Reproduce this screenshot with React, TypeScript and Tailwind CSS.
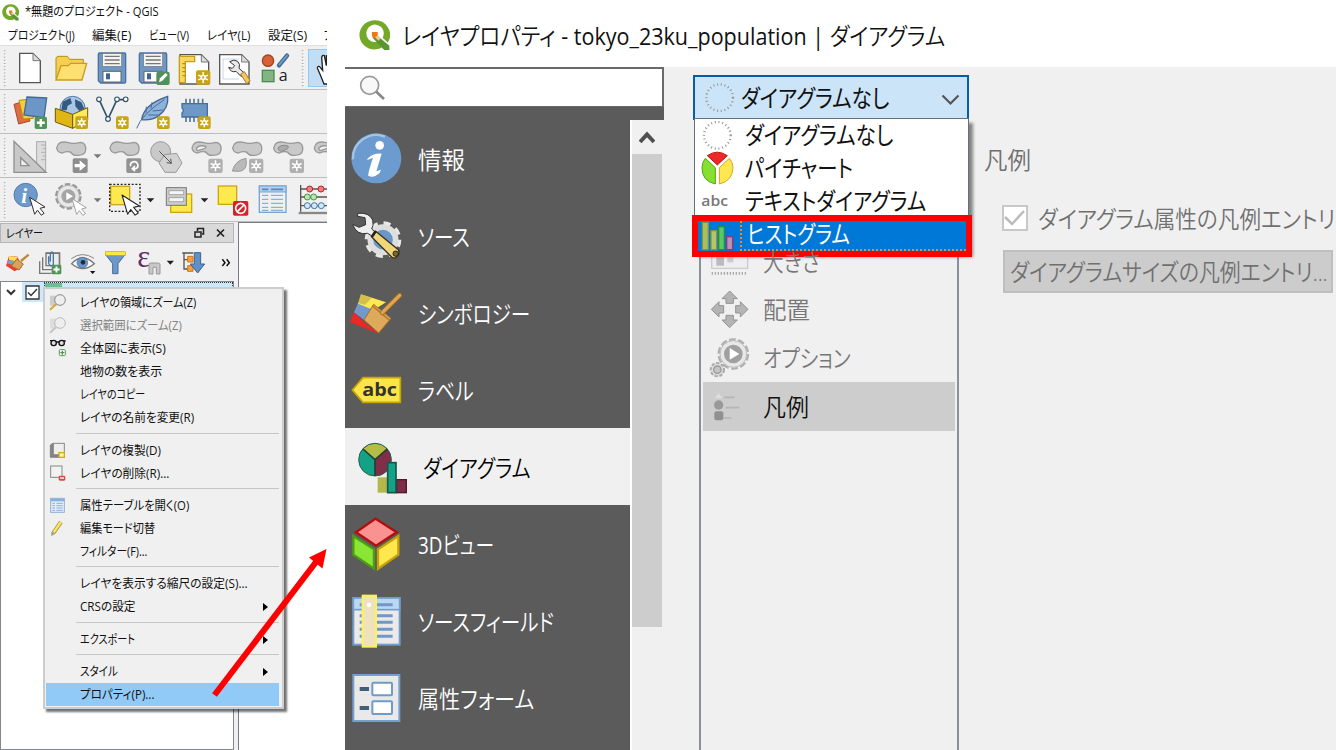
import React, { useLayoutEffect, useRef, useState } from "react";

type Kids = { children?: React.ReactNode };

/* Text condensed or widened to a given run width, like the narrow UI kana of Windows. */
function Fit({ w, className = "", children }: Kids & { w: number; className?: string }) {
  const ref = useRef<HTMLSpanElement>(null);
  const [nat, setNat] = useState(0);
  useLayoutEffect(() => {
    if (ref.current) setNat(ref.current.offsetWidth);
  }, []);
  return (
    <span
      ref={ref}
      className={"inline-block shrink-0 origin-left whitespace-pre leading-none [font-feature-settings:'palt'] " + className}
      style={nat ? { transform: `scaleX(${w / nat})`, marginRight: w - nat } : undefined}
    >
      {children}
    </span>
  );
}

/* Icon cell: three drawing units to one pixel. */
function Ic({ b, children }: Kids & { b: [number, number, number, number] }) {
  return (
    <svg className="block shrink-0 overflow-visible" width={b[2] / 3} height={b[3] / 3} viewBox={b.join(" ")}>
      {children}
    </svg>
  );
}

function Star({ x, y, c = "#c9a416", s = 38 }: { x: number; y: number; c?: string; s?: number }) {
  const m = s / 2;
  return (
    <g transform={`translate(${x} ${y})`}>
      <rect width={s} height={s} rx="6" fill={c} />
      <g stroke="#fff" strokeWidth="4.5">
        <path d={`M${m} 5V${s - 5}M7 ${m - 7}L${s - 7} ${m + 7}M7 ${m + 7}L${s - 7} ${m - 7}`} />
      </g>
      <circle cx={m} cy={m} r="8" fill="#fff" />
      <circle cx={m} cy={m} r="3.5" fill={c} />
    </g>
  );
}

function Plus({ x, y, s = 36 }: { x: number; y: number; s?: number }) {
  const m = s / 2;
  return (
    <g transform={`translate(${x} ${y})`}>
      <rect width={s} height={s} rx={s / 7} fill="#51945a" />
      <path d={`M${m} ${s * 0.18}V${s * 0.82}M${s * 0.18} ${m}H${s * 0.82}`} stroke="#fff" strokeWidth={s / 5} />
    </g>
  );
}

function Handle() {
  return (
    <Ic b={[0, 140, 30, 123]}>
      <path d="M14 150V258" stroke="#a8a8a8" strokeWidth="5" strokeDasharray="3 6.5" />
      <path d="M17 153V258" stroke="#fff" strokeWidth="3" strokeDasharray="3 6.5" />
    </Ic>
  );
}

function Cursor({ x, y, k = 1, f = "#fff", s = "#222" }: { x: number; y: number; k?: number; f?: string; s?: string }) {
  return (
    <path
      transform={`translate(${x} ${y}) scale(${k})`}
      d="M0 0L49 31L33 35L46 51L37 57L25 41L16 54Z"
      fill={f}
      stroke={s}
      strokeWidth="3"
      strokeLinejoin="round"
    />
  );
}

function Qlogo({ s }: { s: number }) {
  return (
    <svg className="block shrink-0" width={s} height={s} viewBox="0 0 96 96">
      <path d="M47 1A46 45 0 1 0 72 84L58 67A27 27 0 1 1 73 55L89 70A46 45 0 0 0 47 1Z" fill="#74a829" />
      <path d="M48 41L94 80V93H78L42 55Z" fill="#589632" />
      <path d="M40 37H58V49L50 57L40 50Z" fill="#ee7913" />
      <path d="M50 54L58 47L67 57L60 64Z" fill="#f3c58f" />
    </svg>
  );
}

function Floppy({ x }: { x: number }) {
  return (
    <g transform={`translate(${x} 0)`}>
      <path d="M2 158H80Q83 158 83 162V244Q83 248 79 248H8L1 241V162Q1 158 5 158Z" fill="#6d97c4" stroke="#4b719c" strokeWidth="4" />
      <rect x="14" y="160" width="57" height="38" fill="#f4f4f2" stroke="#777" strokeWidth="2" />
      <path d="M20 168H65M20 179H65M20 190H65" stroke="#777" strokeWidth="4" />
      <rect x="15" y="213" width="54" height="32" fill="#fff" stroke="#666" strokeWidth="3" />
      <rect x="24" y="219" width="12" height="18" fill="#3d6697" />
    </g>
  );
}

function Page({ x, w = 64 }: { x: number; w?: number }) {
  return (
    <g transform={`translate(${x} 0)`}>
      <path d={`M2 159H${w - 22}L${w} 181V247H2Z`} fill="#fff" stroke="#555" strokeWidth="4" />
      <path d={`M${w - 22} 159V181H${w}Z`} fill="#ddd" stroke="#777" strokeWidth="3" />
    </g>
  );
}

const row = "flex h-[44px] items-center overflow-hidden border-b border-[#bdbdbd] bg-[#f0f0f0]";

function Toolbar1() {
  return (
    <div className={row}>
      <Handle />
      <Ic b={[30, 140, 123, 123]}><Page x={57} /></Ic>
      <Ic b={[153, 140, 123, 123]}>
        <path d="M168 236V172L174 168H202L209 177H250V190" fill="#f5cf52" stroke="#b38f1c" strokeWidth="3" />
        <path d="M168 239L183 196H205L212 189H260L246 239Z" fill="#ffdf70" stroke="#c79c25" strokeWidth="4" />
      </Ic>
      <Ic b={[276, 140, 123, 123]}><Floppy x={294} /></Ic>
      <Ic b={[399, 140, 123, 123]}>
        <Floppy x={417} />
        <rect x="469" y="214" width="40" height="40" rx="6" fill="#4f9159" />
        <path d="M477 246L480 234L497 218L503 224L487 241Z" fill="#fff" />
      </Ic>
      <Ic b={[522, 140, 123, 123]}>
        <g transform="translate(0 4)"><Page x={538} w={88} /></g>
        <path d="M538 168H584V184H556V247H538Z" fill="#f9d65c" stroke="#c59d20" strokeWidth="4" />
        <path d="M547 190H556M547 202H556M547 214H556M547 226H556" stroke="#a88212" strokeWidth="3" />
        <Star x={588} y={210} s={43} />
      </Ic>
      <Ic b={[645, 140, 123, 123]}>
        <g transform="translate(0 4)"><Page x={657} w={90} /></g>
        <path d="M669 176H716M669 236H716M669 176V236" stroke="#a8c4e0" strokeWidth="2" />
        <path d="M689 184Q702 175 713 183Q722 192 717 204L734 219L724 229L708 213Q693 218 686 201L697 204L704 196Z" fill="#e9e9e9" stroke="#333" strokeWidth="3" />
        <path d="M722 222L733 214L750 240L741 251Z" fill="#f1c764" stroke="#a8791f" strokeWidth="3" />
      </Ic>
      <Ic b={[768, 140, 123, 123]}>
        <circle cx="804" cy="181" r="17" fill="#d5603a" stroke="#a5421f" strokeWidth="4" />
        <path d="M837 195L861 166" stroke="#40658f" strokeWidth="13" strokeLinecap="round" />
        <path d="M838 193L861 166" stroke="#6d9ccb" strokeWidth="6" strokeLinecap="round" />
        <rect x="787" y="210" width="35" height="34" fill="#83b583" stroke="#4e8a54" strokeWidth="4" />
        <text x="836" y="241" fontSize="48" fontFamily="Open Sans" fill="#222">a</text>
      </Ic>
      <div className="ml-px h-full w-px bg-[#bbb]" />
      <Handle />
      <div className="flex h-[38px] w-[20px] shrink-0 items-center border border-[#90c8f6] bg-[#c2def5]">
        <Ic b={[930, 145, 60, 110]}>
          <path d="M965 225L955 202Q956 195 962 198L971 209L968 170Q970 162 976 165L982 195V165H995V250H975Z" fill="#fff" stroke="#222" strokeWidth="4" />
        </Ic>
      </div>
    </div>
  );
}

function Toolbar2() {
  return (
    <div className={row}>
      <Handle />
      <Ic b={[30, 272, 123, 123]}>
        <path d="M42 312L74 302L90 362L56 371Z" fill="#dd6e43" stroke="#a9481f" strokeWidth="3" />
        <path d="M57 300L93 296L100 354L70 356Z" fill="#f5cd3d" stroke="#b88d12" strokeWidth="3" />
        <path d="M81 290L140 293L132 352L72 344Z" fill="#6b96c5" stroke="#436a97" strokeWidth="4" />
        <Plus x={104} y={349} s={37} />
      </Ic>
      <Ic b={[153, 272, 123, 123]}>
        <circle cx="218" cy="326" r="38" fill="#a9c6e6" stroke="#4e79a8" strokeWidth="3" />
        <path d="M188 304L211 293L216 309L203 316L200 330H184ZM225 297L244 306L253 325L238 332L226 318Z" fill="#36597f" />
        <path d="M166 324L218 342V384L166 365Z" fill="#e0b616" stroke="#6e5906" strokeWidth="3" />
        <path d="M218 342L263 322V358L218 384Z" fill="#ffe95c" stroke="#6e5906" strokeWidth="3" />
        <Star x={226} y={348} />
      </Ic>
      <Ic b={[276, 272, 123, 123]}>
        <path d="M297 297L324 356L351 298H377" fill="none" stroke="#34536b" strokeWidth="5" />
        <g fill="#fff" stroke="#34536b" strokeWidth="3.5"><circle cx="297" cy="297" r="7" /><circle cx="324" cy="356" r="7" /><circle cx="351" cy="297" r="7" /><circle cx="377" cy="297" r="7" /></g>
        <Star x={348} y={348} />
      </Ic>
      <Ic b={[399, 272, 123, 123]}>
        <path d="M425 358Q431 312 503 288Q507 324 476 346Q456 361 425 358Z" fill="#8db2dc" stroke="#3f668f" strokeWidth="4" />
        <path d="M410 384Q424 343 494 297M438 337L439 319M453 325L456 306M445 344L476 344M458 332L489 329" fill="none" stroke="#456f99" strokeWidth="3" />
        <Star x={471} y={348} />
      </Ic>
      <Ic b={[522, 272, 123, 123]}>
        <path d="M558 295V365M570 295V365M582 295V365M595 295V365M608 295V365" stroke="#597894" strokeWidth="5" />
        <path d="M546 310H622V350H546V338Q554 330 546 323Z" fill="#6d97c4" stroke="#456f9c" strokeWidth="4" />
        <Star x={594} y={348} />
      </Ic>
    </div>
  );
}

const Tri = ({ c = "#222" }: { c?: string }) => (
  <Ic b={[0, 0, 33, 123]}><path d="M5 58H28L16.5 70Z" fill={c} /></Ic>
);

const blob = "M3 25Q6 3 35 8Q52 14 75 8Q92 10 90 31Q88 47 66 47Q53 49 44 37Q33 34 20 40Q5 39 3 25Z";
const Blob = ({ x, hole }: { x: number; hole?: boolean }) => (
  <g transform={`translate(${x} 26)`} stroke="#999" strokeWidth="4">
    <path d={blob} fill="#c9c9c9" />
    {hole && <path d="M17 25Q25 15 44 20Q47 27 33 29L21 33Q15 31 17 25Z" fill="#f0f0f0" />}
  </g>
);
const g = "#b0b0b0";

function Toolbar3() {
  return (
    <div className={row}>
      <Handle />
      <Ic b={[30, 12, 123, 123]}>
        <rect x="110" y="32" width="27" height="92" fill="#ddd" stroke="#aaa" strokeWidth="3" />
        <path d="M123 42H136M128 53H136M123 64H136M128 75H136M123 86H136" stroke="#999" strokeWidth="2" />
        <path fillRule="evenodd" d="M42 31V124H138ZM62 80V104H87Z" fill="#c8c8c8" stroke="#909090" strokeWidth="4" />
      </Ic>
      <Ic b={[153, 12, 123, 123]}>
        <Blob x={167} />
        <rect x="218" y="82" width="45" height="44" rx="5" fill="#8e8e8e" />
        <path d="M224 99H239V88L258 104L239 120V109H224Z" fill="#fff" />
      </Ic>
      <Tri c="#777" />
      <Ic b={[309, 12, 123, 123]}>
        <Blob x={327} />
        <rect x="379" y="82" width="45" height="44" rx="5" fill="#929292" />
        <path d="M392 106A11 11 0 1 1 407 113H397M405 105L397 113L405 120" fill="none" stroke="#fff" strokeWidth="5" />
      </Ic>
      <Ic b={[432, 12, 123, 123]}>
        <circle cx="482" cy="62" r="30" fill="#c9c9c9" stroke="#999" strokeWidth="3" />
        <path d="M494 71L530 67L546 96L528 124H495L477 96Z" fill="#d2d2d2" stroke="#999" strokeWidth="3" />
        <path d="M478 61L514 97M500 95L514 97L512 83" fill="none" stroke="#555" strokeWidth="3" />
      </Ic>
      <Ic b={[555, 12, 123, 123]}><Blob x={573} hole /><Star x={625} y={83} c={g} s={43} /></Ic>
      <Ic b={[678, 12, 123, 123]}>
        <Blob x={695} />
        <path d="M697 120Q705 88 738 82Q744 119 718 121Z" fill="#b9b9b9" stroke="#999" strokeWidth="3" />
        <Star x={747} y={83} c={g} s={43} />
      </Ic>
      <Ic b={[801, 12, 123, 123]}>
        <Blob x={818} />
        <path d="M834 52Q840 39 864 45Q868 53 853 58Q838 66 834 52Z" fill="#ababab" stroke="#888" strokeWidth="3" />
        <Star x={869} y={83} c={g} s={43} />
      </Ic>
      <Ic b={[924, 12, 60, 123]}><Blob x={940} hole /></Ic>
    </div>
  );
}

function Toolbar4() {
  return (
    <div className={row}>
      <Handle />
      <Ic b={[30, 148, 123, 123]}>
        <circle cx="77" cy="196" r="35" fill="#6d9acb" stroke="#527fb1" strokeWidth="3" />
        <text x="64" y="219" fontSize="64" fontStyle="italic" fontWeight="bold" fontFamily="Liberation Serif" fill="#fff">i</text>
        <Cursor x={89} y={203} k={0.94} />
      </Ic>
      <Ic b={[153, 148, 123, 123]}>
        <circle cx="205" cy="200" r="36" fill="#ddd" stroke="#999" strokeWidth="8" strokeDasharray="16 6.600" />
        <circle cx="205" cy="200" r="33" fill="#e7e7e7" stroke="#a5a5a5" strokeWidth="2" />
        <circle cx="205" cy="200" r="21" fill="#a5a5a5" />
        <path d="M199 188L219 200L199 212Z" fill="#fff" />
        <Cursor x={216} y={207} k={0.88} s="#999" />
      </Ic>
      <Tri c="#777" />
      <Ic b={[309, 148, 126, 123]}>
        <rect x="332" y="170" width="57" height="55" fill="#ffe94f" stroke="#cba718" strokeWidth="4" />
        <rect x="329" y="164" width="91" height="81" fill="none" stroke="#222" strokeWidth="4" strokeDasharray="6 5" />
        <Cursor x={366} y={196} k={1.06} />
      </Ic>
      <Tri />
      <Ic b={[468, 148, 129, 123]}>
        <rect x="512" y="193" width="63" height="55" fill="#ffe94f" stroke="#cba718" strokeWidth="4" />
        <rect x="499" y="174" width="60" height="53" fill="#ccc" stroke="#777" strokeWidth="3" />
        <path d="M507 183H551V195H507ZM507 204H551V216H507Z" fill="#f5f5f5" stroke="#888" strokeWidth="2" />
      </Ic>
      <Tri />
      <Ic b={[630, 148, 123, 123]}>
        <rect x="655" y="169" width="55" height="55" fill="#ffe94f" stroke="#cba718" strokeWidth="4" />
        <rect x="699" y="214" width="46" height="44" rx="5" fill="#d3242a" />
        <circle cx="722" cy="236" r="15" fill="none" stroke="#fff" strokeWidth="5" />
        <path d="M712 246L732 226" stroke="#fff" strokeWidth="5" />
      </Ic>
      <Ic b={[753, 148, 123, 123]}>
        <rect x="778" y="169" width="80" height="79" fill="#f0f0ee" stroke="#79a3d2" strokeWidth="4" />
        <rect x="778" y="169" width="80" height="18" fill="#aecfee" stroke="#79a3d2" strokeWidth="3" />
        <path d="M786 179H805M813 179H849" stroke="#5c88b8" strokeWidth="5" />
        <path d="M786 197H805M813 197H849M786 209H805M813 209H849M786 221H805M813 221H849M786 233H805M813 233H849M786 242H805M813 242H849" stroke="#8eb0d6" strokeWidth="4" />
      </Ic>
      <Ic b={[876, 148, 110, 123]}>
        <path d="M902 166V246M902 178H990M902 202H990M902 228H990" stroke="#555" strokeWidth="4" />
        <path d="M896 250H990" stroke="#888" strokeWidth="7" />
        <g fill="#f08080" stroke="#be2323" strokeWidth="3"><circle cx="929" cy="178" r="9" /><circle cx="963" cy="178" r="9" /></g>
        <g fill="#b5e8b0" stroke="#4b9149" strokeWidth="3"><circle cx="922" cy="202" r="9" /><circle cx="941" cy="202" r="9" /></g>
        <g fill="#cfe8fa" stroke="#41749c" strokeWidth="3"><circle cx="922" cy="228" r="9" /><circle cx="943" cy="228" r="9" /><circle cx="964" cy="228" r="9" /></g>
      </Ic>
    </div>
  );
}

function LayerTools() {
  return (
    <div className="flex h-[38px] items-center">
      <Ic b={[0, 345, 105, 105]}>
        <path d="M27 378L53 380L65 412L44 424L18 407Z" fill="#ee3a32" />
        <path d="M27 378L54 382L46 394L27 390Z" fill="#fae44c" />
        <path d="M27 390L46 394L36 404L20 400Z" fill="#779fd3" />
        <path d="M50 387L70 402L57 420L34 408Z" fill="#dba35c" stroke="#a8702a" strokeWidth="3" />
        <path d="M63 393L86 374" stroke="#c28637" strokeWidth="7" />
      </Ic>
      <Ic b={[105, 345, 96, 105]}>
        <path d="M137 369H179V409M119 394V430H155M128 382V419H168" fill="none" stroke="#777" strokeWidth="4" />
        <path d="M138 370H178V407H138Z" fill="#ebebeb" stroke="#777" strokeWidth="4" />
        <path d="M151 395V372Q155 360 160 371V403Q152 413 146 400V379" fill="none" stroke="#4a76a4" strokeWidth="4" />
        <Plus x={155} y={404} s={29} />
      </Ic>
      <Ic b={[201, 345, 99, 105]}>
        <path d="M215 401Q247 367 283 401Q248 430 215 401Z" fill="#fafafa" stroke="#777" strokeWidth="4" />
        <path d="M214 386Q247 362 282 385" fill="none" stroke="#888" strokeWidth="3" />
        <circle cx="247" cy="398" r="16" fill="#6a98c9" stroke="#456f9a" strokeWidth="2" />
        <circle cx="249" cy="397" r="7" fill="#1d2d40" />
        <path d="M270 423H286L278 432Z" fill="#111" />
      </Ic>
      <Ic b={[300, 345, 96, 105]}>
        <path d="M317 374H375L354 401V431H338V401Z" fill="#6d98c8" stroke="#456c9c" strokeWidth="3" />
        <rect x="316" y="365" width="60" height="11" fill="#fae748" stroke="#c8a515" strokeWidth="2" />
      </Ic>
      <Ic b={[396, 345, 99, 105]}>
        <text x="412" y="410" fontSize="92" fontFamily="Liberation Serif" fill="#5d2f64">ε</text>
        <path d="M447 432V403Q447 399 452 399H475Q480 399 480 404V432H469V412H459V432Z" fill="#c7c7c7" stroke="#999" strokeWidth="3" />
      </Ic>
      <Ic b={[495, 345, 33, 105]}><path d="M500 392H522L511 404Z" fill="#222" /></Ic>
      <Ic b={[528, 345, 111, 105]}>
        <path d="M552 370V417H565M552 389H565M547 369H580" fill="none" stroke="#555" strokeWidth="4" />
        <path d="M563 379H579V396H563ZM563 407H579V424H563Z" fill="#f5a13c" stroke="#d87312" strokeWidth="3" />
        <path d="M583 368H602V402H614L593 429L571 402H583Z" fill="#5f90c6" stroke="#3b6490" strokeWidth="3" />
      </Ic>
      <Ic b={[639, 345, 60, 105]}>
        <path d="M667 388L675 398L667 408M680 388L688 398L680 408" fill="none" stroke="#111" strokeWidth="4.500" />
      </Ic>
    </div>
  );
}

function LayerPanel() {
  return (
    <div className="flex flex-1">
      <div className="flex w-[234px] flex-col bg-[#f0f0f0] pt-px">
        <div className="flex h-[20px] items-center border border-[#b5b5b5] bg-[#d9d9d9] pl-[5px] pr-[7px] text-[12px]">
          <Fit w={37} className="mt-px">レイヤー</Fit>
          <svg className="ml-auto" width="32" height="12" viewBox="0 0 32 12" fill="none" stroke="#222">
            <path d="M3.5 4V1.500H9.500V7H8" strokeWidth="1.500" />
            <path d="M1 5H7V10H1Z" strokeWidth="1.500" />
            <path d="M23 2.500L30 9.500M30 2.500L23 9.500" strokeWidth="1.700" />
          </svg>
        </div>
        <LayerTools />
        <div className="flex flex-1 items-start border border-[#828790] bg-white">
          <svg className="block shrink-0" width="21" height="21" viewBox="0 0 21 21"><path d="M6 8L10 12L14 8" fill="none" stroke="#333" strokeWidth="2" /></svg>
          <div className="flex h-[20px] w-[22px] items-center bg-[#cce8ff] pl-[3px]">
            <svg width="15" height="15" viewBox="0 0 15 15"><path d="M1 1H14V14H1Z" fill="#fff" stroke="#333" strokeWidth="1.300" /><path d="M3 7.500L6 10.500L12 4" fill="none" stroke="#333" strokeWidth="1.400" /></svg>
          </div>
          <div className="h-[20px] flex-1 border border-dotted border-[#333] bg-[#cce8ff]">
            <div className="h-[6px] w-[17px] bg-[#6fbd94]" />
          </div>
        </div>
      </div>
      <div className="w-[4px] bg-[#f0f0f0]" />
      <div className="flex-1 border-l border-t border-[#777b84] bg-white" />
    </div>
  );
}

type Entry = { t: string; w: number; sub?: boolean; off?: boolean; hot?: boolean; icon?: React.ReactNode } | null;

const Lens = ({ off }: { off?: boolean }) => (
  <g opacity={off ? 0.5 : 1}>
    <path d="M150 46H172V76H150Z" fill="#ccc" />
    <path d="M168 72L150 88" stroke={off ? "#999" : "#d5a638"} strokeWidth="6" />
    <circle cx="180" cy="59" r="16" fill="#eee" stroke="#888" strokeWidth="3" />
  </g>
);

const entries: Entry[] = [
  { t: "レイヤの領域にズーム(Z)", w: 116, icon: <Lens /> },
  { t: "選択範囲にズーム(Z)", w: 102, off: true, icon: <Lens off /> },
  {
    t: "全体図に表示(S)", w: 86,
    icon: (
      <g>
        <path d="M150 43H160M165 47H180M190 44H197" stroke="#111" strokeWidth="4" />
        <g fill="#ddd" stroke="#111" strokeWidth="4"><circle cx="161" cy="50" r="8" /><circle cx="185" cy="50" r="8" /></g>
        <rect x="178" y="70" width="18" height="18" rx="3" fill="#fff" stroke="#51945a" strokeWidth="3" />
        <path d="M187 73V85M181 79H193" stroke="#51945a" strokeWidth="4" />
      </g>
    ),
  },
  { t: "地物の数を表示", w: 82 },
  { t: "レイヤのコピー", w: 65 },
  { t: "レイヤの名前を変更(R)", w: 114 },
  null,
  {
    t: "レイヤの複製(D)", w: 81,
    icon: (
      <g>
        <path d="M151 50L159 45V81H188L184 87H151Z" fill="#888" stroke="#666" strokeWidth="2" />
        <rect x="160" y="45" width="33" height="34" fill="#eee" stroke="#888" strokeWidth="3" />
        <rect x="177" y="73" width="16" height="14" fill="#fff6b0" stroke="#d0a91d" strokeWidth="4" />
      </g>
    ),
  },
  {
    t: "レイヤの削除(R)...", w: 89,
    icon: (
      <g>
        <rect x="152" y="44" width="34" height="34" fill="#f2f2f2" stroke="#888" strokeWidth="3" />
        <rect x="176" y="73" width="20" height="15" rx="4" fill="#df4850" />
        <path d="M180 80H192" stroke="#fff" strokeWidth="4" />
      </g>
    ),
  },
  null,
  {
    t: "属性テーブルを開く(O)", w: 109,
    icon: (
      <g>
        <rect x="152" y="45" width="41" height="42" fill="#e5edf6" stroke="#8dafd6" strokeWidth="3" />
        <path d="M152 50H193" stroke="#87b0de" strokeWidth="8" />
        <path d="M157 60H165M169 60H188M157 67H165M169 67H188M157 74H165M169 74H188M157 81H165M169 81H188" stroke="#8dafd6" strokeWidth="3" />
      </g>
    ),
  },
  {
    t: "編集モード切替", w: 75,
    icon: (
      <g>
        <path d="M160 80L183 47" stroke="#b29b27" strokeWidth="12" />
        <path d="M161 78L183 47" stroke="#f6e679" strokeWidth="7" />
        <path d="M154 76L164 83L154 90Z" fill="#999" />
      </g>
    ),
  },
  { t: "フィルター(F)...", w: 67 },
  null,
  { t: "レイヤを表示する縮尺の設定(S)...", w: 168 },
  { t: "CRSの設定", w: 56, sub: true },
  null,
  { t: "エクスポート", w: 55, sub: true },
  null,
  { t: "スタイル", w: 38, sub: true },
  { t: "プロパティ(P)...", w: 74, hot: true },
];

function ContextMenu() {
  return (
    <div className="absolute left-[43px] top-[287px] h-[422px] w-[241px] border-2 border-[#ccc] bg-[#f0f0f0] px-px pt-[2px] text-[12.500px] shadow-[3px_3px_2px_rgba(0,0,0,0.550)]">
      {entries.map((e, i) =>
        e ? (
          <div key={i} className={"flex h-[23.1px] w-[233px] items-center " + (e.hot ? "bg-[#91c9f7]" : "") + (e.off ? " text-[#838383]" : " text-[#111]")}>
            <Ic b={[138, 32, 102, 69]}>{e.icon}</Ic>
            <Fit w={e.w} className="mt-px">{e.t}</Fit>
            {e.sub && <svg className="ml-auto mr-[11px]" width="5" height="8" viewBox="0 0 5 8"><path d="M0 0L5 4L0 8Z" fill="#000" /></svg>}
          </div>
        ) : (
          <div key={i} className="flex h-[9.2px] items-start pt-[3px]"><div className="ml-[30px] h-px w-[203px] bg-[#c6c6c6]" /></div>
        )
      )}
    </div>
  );
}

const menus: [string, number, string][] = [
  ["プロジェクト(J)", 67, "w-[84px]"],
  ["編集(E)", 39, "w-[57px]"],
  ["ビュー(V)", 40, "w-[58px]"],
  ["レイヤ(L)", 43, "w-[61px]"],
  ["設定(S)", 39, "w-[56px]"],
];

function MainWindow() {
  return (
    <div className="relative flex w-[327px] shrink-0 flex-col overflow-hidden">
      <div className="flex h-[24px] items-center gap-[6px] pl-[2px] text-[12.500px]">
        <Qlogo s={17} />
        <Fit w={134} className="mt-px">*無題のプロジェクト - QGIS</Fit>
      </div>
      <div className="flex h-[22px] items-center overflow-hidden border-b border-[#e0e0e0] pl-[8px] pt-[3px] text-[12.500px]">
        {menus.map(([t, w, c]) => <div key={t} className={"flex shrink-0 " + c}><Fit w={w}>{t}</Fit></div>)}
        <Fit w={8}>プ</Fit>
      </div>
      <Toolbar1 />
      <Toolbar2 />
      <Toolbar3 />
      <Toolbar4 />
      <LayerPanel />
      <ContextMenu />
    </div>
  );
}

const sections: { pre?: string; t: string; w: number; y: number; on?: boolean; icon: React.ReactNode }[] = [
  {
    t: "情報", w: 47, y: 360,
    icon: (
      <g>
        <circle cx="94" cy="475" r="75" fill="#6b9bcf" />
        <path d="M24 478A70 70 0 0 1 120 410" fill="none" stroke="#a4c4e6" strokeWidth="7" />
        <circle cx="104" cy="436" r="13" fill="#fff" />
        <path d="M67 477Q84 459 110 461L94 514L108 509L104 519Q85 536 70 527Q68 520 84 473L67 480Z" fill="#fff" />
      </g>
    ),
  },
  {
    t: "ソース", w: 52, y: 591,
    icon: (
      <g>
        <circle cx="114" cy="719" r="49" fill="none" stroke="#e8e8e8" strokeWidth="12" strokeDasharray="21 17.500" />
        <circle cx="114" cy="719" r="38" fill="#6897c8" stroke="#dedede" strokeWidth="17" />
        <path d="M38 640Q72 636 83 660Q87 678 80 687L93 698L84 710L68 700Q35 707 23 673L42 682L62 674L60 653L38 649Z" fill="#eee" stroke="#333" strokeWidth="3" />
        <path d="M92 694L160 749Q167 763 151 774Q143 776 136 767L80 711Z" fill="#f0d67b" stroke="#39301a" strokeWidth="4" />
        <path d="M92 694L80 711" stroke="#222" strokeWidth="8" />
        <circle cx="152" cy="761" r="8" fill="#7a6a2d" stroke="#222" strokeWidth="3" />
      </g>
    ),
  },
  {
    t: "シンボロジー", w: 112, y: 12,
    icon: (
      <g>
        <path d="M27 126L60 160L101 189L95 189L15 156Z" fill="#ec2724" />
        <path d="M39 99L83 113L63 144L60 152L27 127Z" fill="#7398cc" />
        <path d="M48 73L123 97L86 120L39 101Z" fill="#fbe94f" />
        <path d="M48 73L80 84L60 104L39 99Z" fill="#bba94c" opacity=".65" />
        <path d="M86 103L138 145L101 189L57 150Z" fill="#dfa95b" stroke="#a66e26" strokeWidth="3" />
        <path d="M82 107L134 151" stroke="#b67a2d" strokeWidth="5" />
        <path d="M112 128L164 76" stroke="#a46e23" strokeWidth="15" strokeLinecap="round" />
        <path d="M112 128L164 76" stroke="#e2a551" strokeWidth="9" strokeLinecap="round" />
      </g>
    ),
  },
  {
    t: "ラベル", w: 56, y: 243,
    icon: (
      <g>
        <path d="M22 360L54 323H166V397H54Z" fill="#fbe549" stroke="#c6a500" strokeWidth="5" />
        <text x="52" y="377" fontSize="55" fontWeight="bold" fontFamily="Open Sans" fill="#333" textLength="104" lengthAdjust="spacingAndGlyphs">abc</text>
      </g>
    ),
  },
  {
    t: "ダイアグラム", w: 108, y: 474, on: true,
    icon: (
      <g>
        <circle cx="90" cy="569" r="49" fill="#13a286" />
        <path d="M90 569V618A49 49 0 0 0 127 537Z" fill="#832e49" />
        <path d="M90 569L54 537A49 49 0 0 1 127 537Z" fill="#b4be45" />
        <circle cx="90" cy="569" r="49" fill="none" stroke="#285e51" strokeWidth="3" />
        <path d="M90 569V618M90 569L54 537M90 569L127 537" stroke="#243f36" strokeWidth="5" />
        <rect x="98" y="622" width="32" height="46" fill="#b4b84b" />
        <rect x="155" y="629" width="29" height="39" fill="#812c46" stroke="#4e1930" strokeWidth="4" />
        <rect x="128" y="578" width="25" height="90" fill="#13a286" stroke="#14584b" strokeWidth="5" />
      </g>
    ),
  },
  {
    pre: "3D", t: "ビュー", w: 76, y: 15,
    icon: (
      <g strokeWidth="7">
        <path d="M92 56L155 97L93 137L33 97Z" fill="#f99291" stroke="#b30d0d" />
        <path d="M25 108L87 148V206L25 164Z" fill="#8be534" stroke="#4d9c13" />
        <path d="M160 108L99 148V206L160 164Z" fill="#ffe84b" stroke="#c6a20a" />
      </g>
    ),
  },
  {
    t: "ソースフィールド", w: 136, y: 246,
    icon: (
      <g>
        <rect x="25" y="294" width="139" height="140" fill="#eceae8" stroke="#729dcc" strokeWidth="6" />
        <rect x="25" y="294" width="139" height="35" fill="#bad8f0" stroke="#729dcc" strokeWidth="5" />
        <path d="M44 314H143M44 347H143M44 367H143M44 388H143M44 409H143" stroke="#6f98c7" strokeWidth="9" />
        <rect x="53" y="287" width="40" height="153" fill="#eee1bd" stroke="#fff34d" strokeWidth="6" />
        <circle cx="72" cy="315" r="7" fill="#fff" />
      </g>
    ),
  },
  {
    t: "属性フォーム", w: 116, y: 477,
    icon: (
      <g>
        <rect x="25" y="525" width="138" height="138" fill="#e9e9e9" stroke="#779fce" strokeWidth="6" />
        <rect x="82" y="548" width="59" height="38" rx="3" fill="#fff" stroke="#6e9bcc" strokeWidth="6" />
        <rect x="82" y="604" width="59" height="38" rx="3" fill="#fff" stroke="#6e9bcc" strokeWidth="6" />
        <path d="M44 567H72M44 624H72" stroke="#425f79" strokeWidth="12" />
      </g>
    ),
  },
];

function Sidebar() {
  return (
    <div className="flex w-[319px] shrink-0 flex-col overflow-hidden bg-[#5b5b5b]">
      <div className="flex h-[40px] shrink-0 items-center border-b border-r-2 border-t-2 border-[#6a6a6a] bg-white">
        <Ic b={[0, 210, 180, 105]}>
          <circle cx="74" cy="256" r="27" fill="#f8f8f8" stroke="#999" strokeWidth="5" />
          <path d="M94 275L117 297" stroke="#888" strokeWidth="8" />
        </Ic>
      </div>
      <div className="mt-[13px] flex flex-1">
        <div className="flex w-[285px] flex-col">
          {sections.map((s) => (
            <div key={s.t} className={"flex h-[77px] shrink-0 items-center text-[24px] " + (s.on ? "gap-[5px] bg-[#f0f0f0] text-black" : "text-white")}>
              <Ic b={[0, s.y, 219, 231]}>{s.icon}</Ic>
              <Fit w={s.w} className="mt-[2px] font-[350]">
                {s.pre && <span className="font-normal">{s.pre}</span>}
                {s.t}
              </Fit>
            </div>
          ))}
        </div>
        <div className="flex flex-1 flex-col border-l-2 border-white bg-[#f0f0f0] pr-[2px]">
          <div className="flex h-[34px] shrink-0 items-center justify-center">
            <svg width="16" height="14" viewBox="0 0 16 14"><path d="M1 12L8 4.500L15 12" fill="none" stroke="#505050" strokeWidth="4" /></svg>
          </div>
          <div className="h-[473px] shrink-0 bg-[#cdcdcd]" />
        </div>
      </div>
    </div>
  );
}

const Ring = ({ x, y }: { x: number; y: number }) => (
  <circle cx={x} cy={y} r="40" fill="none" stroke="#949494" strokeWidth="7" strokeDasharray="3 8.220" />
);

const options: { t: string; w: number; y: number; icon: React.ReactNode }[] = [
  { t: "ダイアグラムなし", w: 148, y: 180, icon: <Ring x={112} y={229} /> },
  {
    t: "パイチャート", w: 108, y: 278,
    icon: (
      <g strokeWidth="3">
        <path d="M112 317L82 289Q112 268 142 289Z" fill="#ee2727" stroke="#b71717" />
        <path d="M106 325V374Q65 365 66 324Q67 308 76 297Z" fill="#86e02d" stroke="#4fa313" />
        <path d="M118 325V374Q158 365 159 324Q158 308 148 297Z" fill="#ffe752" stroke="#ccaa20" />
      </g>
    ),
  },
  {
    t: "テキストダイアグラム", w: 181, y: 376,
    icon: <text x="64" y="442" fontSize="42" fontWeight="600" fontFamily="Open Sans" fill="#777" textLength="80" lengthAdjust="spacingAndGlyphs">abc</text>,
  },
];

function Combo() {
  return (
    <div className="relative h-[45px] w-[276px]">
      <div className="flex h-full items-center border-2 border-[#0a5ba3] bg-[#cce4f7] text-[24px]">
        <Ic b={[45, 50, 138, 123]}><Ring x={119} y={112} /></Ic>
        <Fit w={148}>ダイアグラムなし</Fit>
        <svg className="ml-auto mr-[7px] mt-[4px]" width="19" height="12" viewBox="0 0 19 12"><path d="M1.500 1.500L9.500 9.500L17.500 1.500" fill="none" stroke="#555" strokeWidth="2.200" /></svg>
      </div>
      <div className="absolute left-[1px] top-[43px] h-[134px] w-[275px] border border-[#66707c] bg-white text-[24px] shadow-[4px_5px_3px_rgba(0,0,0,0.450)]">
        {options.map((o) => (
          <div key={o.t} className="flex h-[32.7px] items-center">
            <Ic b={[45, o.y, 150, 98]}>{o.icon}</Ic>
            <Fit w={o.w}>{o.t}</Fit>
          </div>
        ))}
      </div>
      <div className="absolute left-[-1px] top-[140px] flex h-[42px] w-[280px] items-center border-[6px] border-[#ff0000] bg-[#0078d7] text-[24px] text-white">
        <Ic b={[54, 483, 126, 90]}>
          <g strokeWidth="4">
            <rect x="67" y="487" width="18" height="82" fill="#aabd61" stroke="#7d9340" />
            <rect x="93" y="512" width="17" height="57" fill="#b7c56a" stroke="#849344" />
            <rect x="116" y="500" width="17" height="69" fill="#5ac962" stroke="#2e8a3e" />
            <rect x="140" y="530" width="18" height="39" fill="#be8eb5" stroke="#7e3f78" />
          </g>
        </Ic>
        <div className="flex h-full flex-1 items-center border-b-2 border-l-2 border-dotted border-[#f08a28] pb-[3px] pl-[5px]">
          <Fit w={103}>ヒストグラム</Fit>
        </div>
      </div>
    </div>
  );
}

const tabs: { t: string; w: number; y: number; on?: boolean; icon: React.ReactNode }[] = [
  {
    t: "大きさ", w: 57, y: -9,
    icon: (
      <g>
        <path d="M95 30H203V85H95Z" fill="#eee" stroke="#ccc" strokeWidth="4" />
        <path d="M109 52H132V77H109Z" fill="#bbb" /><path d="M142 52H160V67H142Z" fill="#ccc" />
        <path d="M95 100H203" stroke="#aaa" strokeWidth="8" strokeDasharray="4 5" />
      </g>
    ),
  },
  {
    t: "配置", w: 47, y: 133,
    icon: (
      <g fill="#b4b4b4" stroke="#939393" strokeWidth="3">
        <path d="M149 151L172 174H160V188H138V174H126Z" />
        <path d="M149 261L172 238H160V224H138V238H126Z" />
        <path d="M94 206L117 183V195H131V217H117V229Z" />
        <path d="M204 206L181 183V195H167V217H181V229Z" />
      </g>
    ),
  },
  {
    t: "オプション", w: 88, y: 281,
    icon: (
      <g>
        <circle cx="160" cy="341" r="44" fill="#eee" stroke="#b0b0b0" strokeWidth="7" strokeDasharray="20 7.600" />
        <circle cx="160" cy="341" r="40" fill="#e8e8e8" stroke="#bbb" strokeWidth="3" />
        <circle cx="160" cy="341" r="28" fill="#a0a0a0" />
        <path d="M149 323L178 341L149 358Z" fill="#fff" />
        <circle cx="112" cy="388" r="20" fill="#ddd" stroke="#aaa" strokeWidth="6" strokeDasharray="10 5" />
        <circle cx="112" cy="388" r="11" fill="#c4c4c4" stroke="#999" strokeWidth="4" />
      </g>
    ),
  },
  {
    t: "凡例", w: 46, y: 426, on: true,
    icon: (
      <g>
        <path d="M116 459L127 475H105Z" fill="#ddd" />
        <circle cx="116" cy="495" r="14" fill="#999" /><rect x="103" y="514" width="27" height="27" rx="6" fill="#909090" />
        <path d="M132 472H163M137 503H178M132 534H154" stroke="#b5b5b5" strokeWidth="5" />
      </g>
    ),
  },
];

function Dialog() {
  return (
    <div className="flex min-w-0 flex-1 flex-col bg-white">
      <div className="flex h-[67px] shrink-0 items-center gap-[12px] pl-[14px] pt-[3px] text-[24px]">
        <Qlogo s={31} />
        <Fit w={543} className="mt-[2px] font-[350]">
          レイヤプロパティ<span className="font-normal"> - tokyo_23ku_population | </span>ダイアグラム
        </Fit>
      </div>
      <div className="flex flex-1 overflow-hidden bg-[#f0f0f0]">
        <Sidebar />
        <div className="flex w-[320px] shrink-0 flex-col pl-[29px] pt-[8px]">
          <Combo />
          <div className="ml-[6px] flex w-[260px] flex-1 flex-col border-x-2 border-[#8b9099] px-[2px] pt-[117px]">
            {tabs.map((t) => (
              <div key={t.t} className={"flex h-[48.400px] shrink-0 items-center text-[24px] " + (t.on ? "bg-[#cdcdcd] text-[#111]" : "text-[#777]")}>
                <Ic b={[69, t.y, 180, 145]}>{t.icon}</Ic>
                <Fit w={t.w} className="mt-px font-[350]">{t.t}</Fit>
              </div>
            ))}
          </div>
        </div>
        <div className="flex min-w-0 flex-1 flex-col overflow-hidden pt-[78px] text-[24px] font-[350] text-[#707070]">
          <div className="flex h-[30px] items-center"><Fit w={47}>凡例</Fit></div>
          <div className="mt-[29px] flex h-[28px] items-center pl-[18px]">
            <svg className="mr-[10px] shrink-0" width="26" height="26" viewBox="0 0 26 26"><path d="M1 1H25V25H1Z" fill="#fff" stroke="#c8c8c8" strokeWidth="2" /><path d="M3 12L10 19L22 6" fill="none" stroke="#bbb" strokeWidth="2.500" /></svg>
            <Fit w={317} className="mt-px">ダイアグラム属性の凡例エントリを</Fit>
          </div>
          <div className="ml-[19px] mt-[18px] flex h-[43px] w-[330px] items-center border-2 border-[#bfbfbf] bg-[#ccc] pl-[5px]">
            <Fit w={318}>ダイアグラムサイズの凡例エントリ...</Fit>
          </div>
        </div>
      </div>
    </div>
  );
}

export default function App() {
  return (
    <div lang="ja" className="relative flex h-[750px] w-[1336px] gap-[18px] overflow-hidden bg-white font-['Open_Sans','Noto_Sans_CJK_JP',sans-serif] text-[#111]">
      <MainWindow />
      <Dialog />
      <svg className="absolute left-[205px] top-[540px]" width="130" height="165" viewBox="205 540 130 165">
        <path d="M214.500 695L316 562" stroke="#f00" strokeWidth="6" />
        <path d="M326.500 549L309 557.500L322.500 568.500Z" fill="#f00" />
      </svg>
    </div>
  );
}
